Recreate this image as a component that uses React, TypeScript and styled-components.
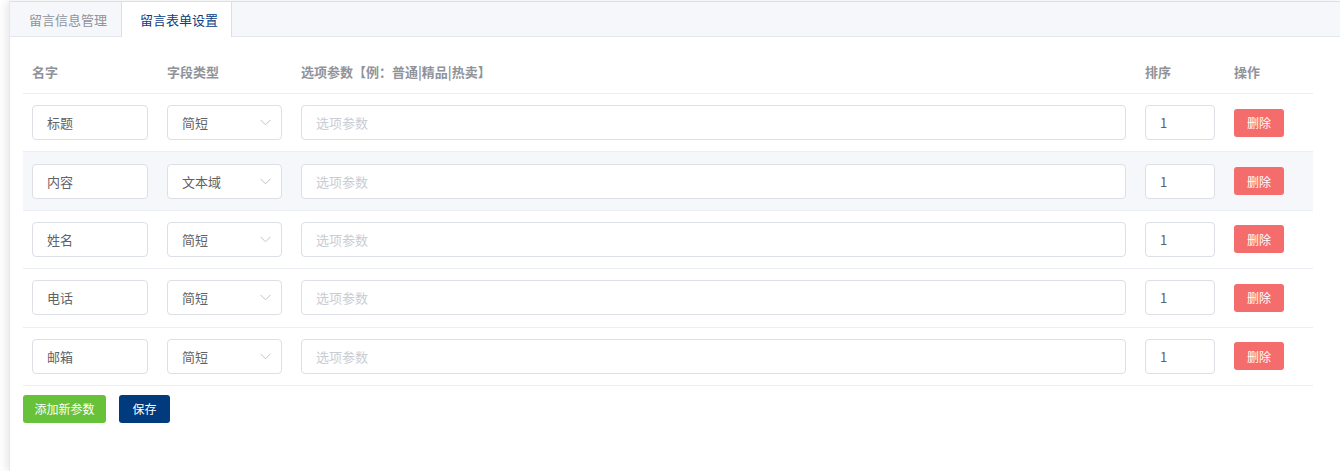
import React from "react";
import styled, { createGlobalStyle } from "styled-components";

const Global = createGlobalStyle`
  html, body {
    margin: 0;
    padding: 0;
    background: #fff;
    font-family: "Microsoft YaHei", "Noto Sans CJK SC", "Noto Sans", sans-serif;
  }
  * { box-sizing: border-box; }
`;

const Page = styled.div`
  padding: 1px 0 0 9px;
  height: 471px;
  overflow: hidden;
`;

const Card = styled.div`
  height: 470px;
  background: #fff;
  border-top: 1px solid #dcdfe6;
  border-left: 1px solid #e4e7ed;
  box-shadow: -3px 0 8px rgba(0, 0, 0, 0.09);
`;

const TabBar = styled.div`
  display: flex;
  height: 35px;
  background: #f5f7fa;
  border-bottom: 1px solid #e4e7ed;
`;

const Tab = styled.div<{ $active?: boolean }>`
  padding: ${p => (p.$active ? "0 13px 0 18px" : "0 13px 0 18px")};
  display: flex;
  align-items: center;
  font-size: 13px;
  color: ${p => (p.$active ? "#0b3d82" : "#909399")};
  background: ${p => (p.$active ? "#fff" : "transparent")};
  border-left: 1px solid ${p => (p.$active ? "#dcdfe6" : "transparent")};
  border-right: 1px solid ${p => (p.$active ? "#dcdfe6" : "transparent")};
  height: ${p => (p.$active ? "35px" : "34px")};
`;

const Body = styled.div`
  padding: 13px 0 0 13px;
`;

const Grid = styled.div`
  width: 1290px;
`;

const Row = styled.div<{ $striped?: boolean; $head?: boolean }>`
  display: grid;
  grid-template-columns: 135px 134px 844px 89px 88px;
  align-items: center;
  height: ${p => (p.$head ? "44px" : "58.4px")};
  border-bottom: 1px solid #ebeef5;
  background: ${p => (p.$striped ? "#f5f7fa" : "transparent")};
`;

const Cell = styled.div`
  padding: 0 10px 0 9px;
  display: flex;
  align-items: center;
`;

const HeadCell = styled(Cell)`
  font-size: 13px;
  font-weight: bold;
  color: #909399;
  padding-bottom: 1px;
`;

const Field = styled.div<{ $placeholder?: boolean }>`
  width: 100%;
  height: 35px;
  border: 1px solid #dcdfe6;
  border-radius: 4px;
  background: #fff;
  padding: 0 14px;
  display: flex;
  align-items: center;
  font-size: 13px;
  color: ${p => (p.$placeholder ? "#c8ccd4" : "#606266")};
`;

const SelectField = styled(Field)`
  justify-content: space-between;
  padding-right: 10px;
`;

const Btn = styled.button<{ $color: string; $w: number }>`
  width: ${p => p.$w}px;
  height: 28px;
  border: none;
  border-radius: 3px;
  background: ${p => p.$color};
  color: #fff;
  font-size: 12px;
  font-family: inherit;
  padding: 0;
  cursor: pointer;
`;

const Footer = styled.div`
  display: flex;
  gap: 13px;
  padding-top: 9px;
`;

const Chevron = () => (
  <svg width="11" height="7" viewBox="0 0 11 7" fill="none">
    <path d="M0.5 0.8 L5.5 5.8 L10.5 0.8" stroke="#c0c4cc" strokeWidth="1" />
  </svg>
);

const rows = [
  { name: "标题", type: "简短" },
  { name: "内容", type: "文本域" },
  { name: "姓名", type: "简短" },
  { name: "电话", type: "简短" },
  { name: "邮箱", type: "简短" },
];

export default function App() {
  return (
    <>
      <Global />
      <Page>
        <Card>
          <TabBar>
            <Tab>留言信息管理</Tab>
            <Tab $active>留言表单设置</Tab>
          </TabBar>
          <Body>
            <Grid>
              <Row $head>
                <HeadCell>名字</HeadCell>
                <HeadCell>字段类型</HeadCell>
                <HeadCell>选项参数【例：普通|精品|热卖】</HeadCell>
                <HeadCell>排序</HeadCell>
                <HeadCell>操作</HeadCell>
              </Row>
              {rows.map((r, i) => (
                <Row key={r.name} $striped={i === 1}>
                  <Cell>
                    <Field>{r.name}</Field>
                  </Cell>
                  <Cell>
                    <SelectField>
                      {r.type}
                      <Chevron />
                    </SelectField>
                  </Cell>
                  <Cell>
                    <Field $placeholder>选项参数</Field>
                  </Cell>
                  <Cell>
                    <Field>1</Field>
                  </Cell>
                  <Cell>
                    <Btn $color="#f56c6c" $w={50}>删除</Btn>
                  </Cell>
                </Row>
              ))}
            </Grid>
            <Footer>
              <Btn $color="#67c23a" $w={83}>添加新参数</Btn>
              <Btn $color="#023a7e" $w={51}>保存</Btn>
            </Footer>
          </Body>
        </Card>
      </Page>
    </>
  );
}
